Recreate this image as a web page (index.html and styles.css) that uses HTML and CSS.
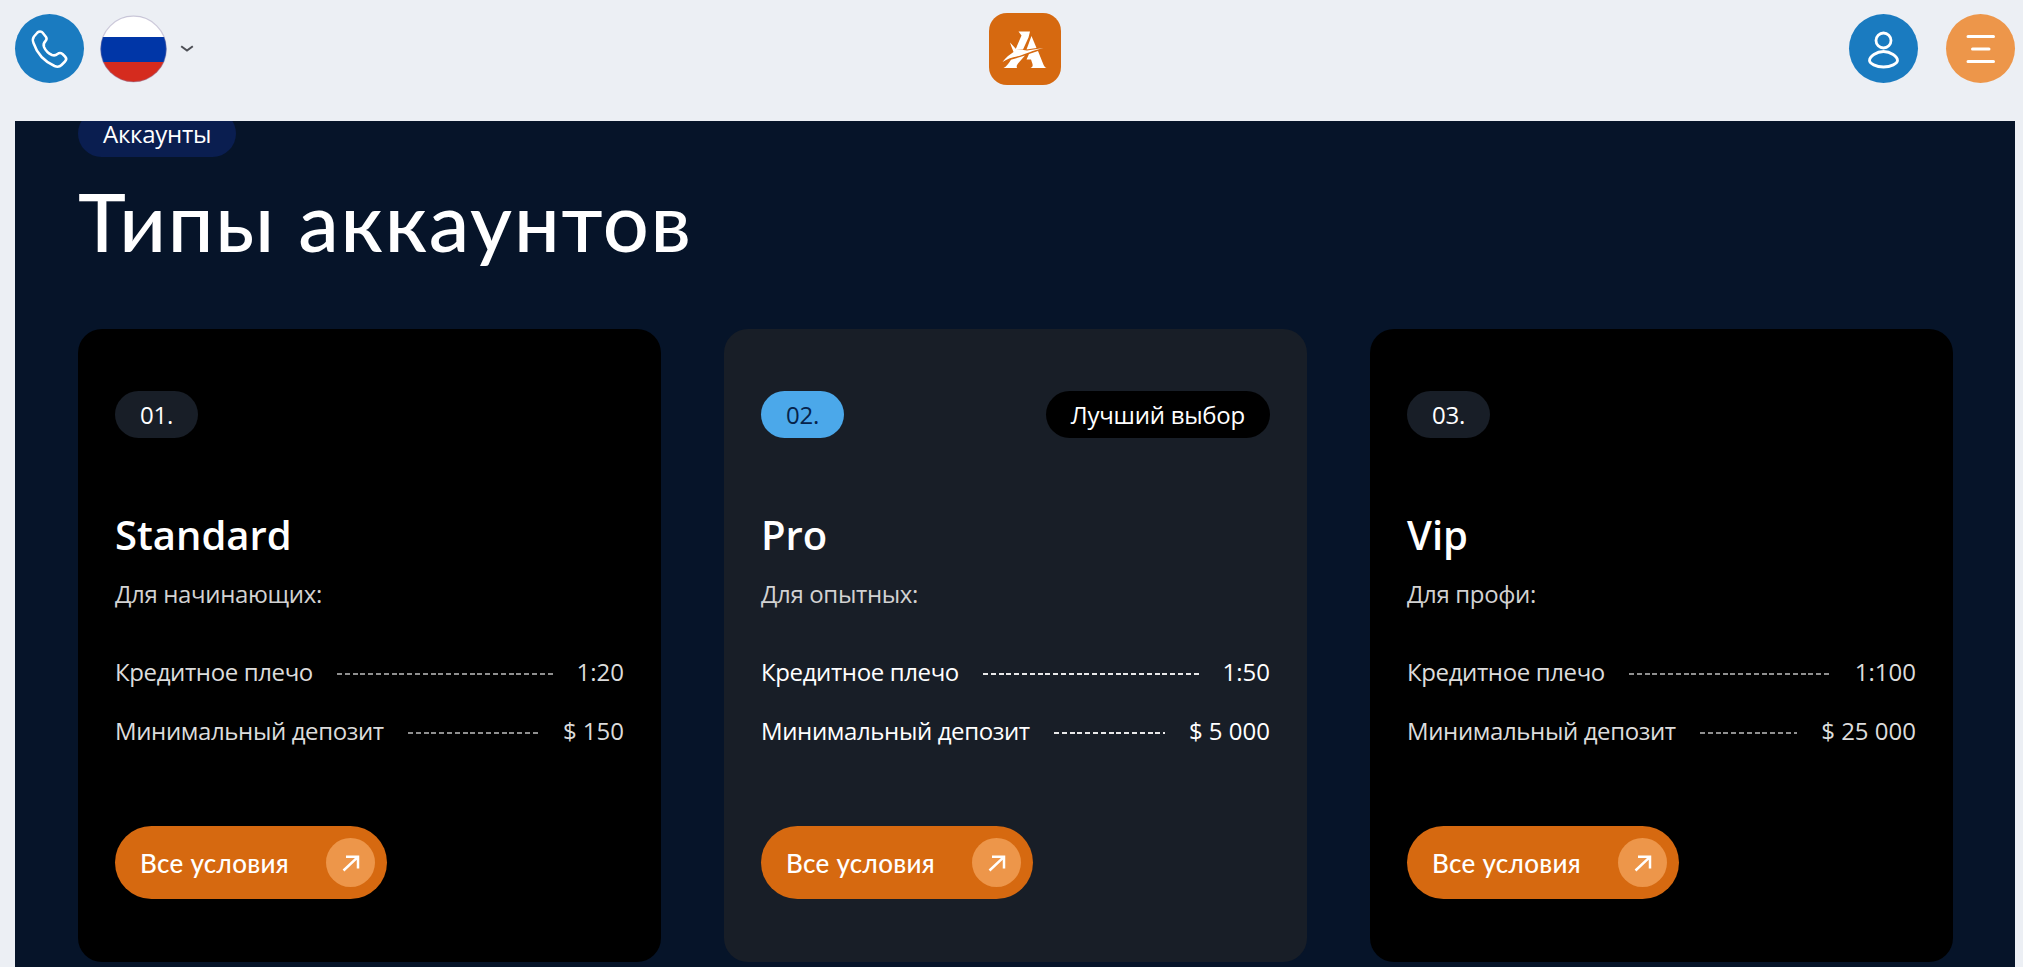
FILE: index.html
```html
<!DOCTYPE html>
<html lang="ru">
<head>
  <meta charset="UTF-8">
  <meta name="viewport" content="width=device-width, initial-scale=1.0">
  <title>Типы аккаунтов</title>

  <link rel="stylesheet" href="styles.css">
</head>
<body>

  <header class="header">
    <div class="header-group">
      <a class="round-btn" href="#" aria-label="Телефон">
        <svg width="69" height="69" viewBox="0 0 69 69" fill="none" stroke="#fff" stroke-width="2.5" stroke-linejoin="round">
          <path d="M22.5 18.5 C24 17 26.500 17 27.500 18.500 L31 23 C32 24.500 31.500 26 30.500 27 C28.500 29 28 30.500 29 33 C30.500 36.500 33.500 39.500 37 41 C39 41.700 41 41.300 42.500 40 C44 38.800 46 38.800 47.500 40 L50 42.500 C51.500 44 51.500 46 50 47.500 L46.500 51 C44.500 53 42 53 39.500 52 C29.500 47.500 22 39.500 18.500 29 C17.500 26.500 17.500 24.500 19 22.500 Z"/>
        </svg>
      </a>
      <button class="lang">
        <svg class="flag" width="67" height="68" viewBox="0 0 67 68">
          <clipPath id="flag-clip"><circle cx="33.500" cy="34" r="33"/></clipPath>
          <g clip-path="url(#flag-clip)">
            <rect width="67" height="68" fill="#fff"/>
            <rect y="22" width="67" height="25" fill="#0036a7"/>
            <rect y="47" width="67" height="21" fill="#d52b1e"/>
          </g>
          <circle cx="33.500" cy="34" r="32.800" fill="none" stroke="#8a7fa8" stroke-opacity=".4" stroke-width="1.200"/>
        </svg>
        <svg width="14" height="8" viewBox="0 0 14 8" fill="none" stroke="#4d4f55" stroke-width="2">
          <path d="M1.200 1.200 L7 5.600 L12.800 1.200"/>
        </svg>
      </button>
    </div>

    <a class="logo" href="#" aria-label="Главная">
      <svg width="72" height="72" viewBox="0 0 72 72" fill="#fff">
        <path d="M29.500 18.500 H41 L39.500 24.500 L34 36.500 L26.500 36.500 L32.500 22.500 Z"/>
        <path d="M42.500 23 L47.500 35 L37.500 36.500 Z"/>
        <path d="M21 29.500 L27 36 L38 37.500 L54.500 35 C44 37.500 36 41 30 43 C23 44.500 17.500 46 13.500 49 C17 44 21 41.500 24.500 39 C23.500 36 22 33 21 29.500 Z"/>
        <path d="M22 46.800 L36 42.500 L29 50.500 C27.500 52.500 27.500 53.500 28 55 H14.500 C17.500 53.500 19.500 51 22 46.800 Z"/>
        <path d="M40 41 L49 38 L54 50.500 C55 53 56 54.500 57.500 55 H41.500 C43.500 54 44 53 43.500 51 L42 46.500 L37.500 46.500 Z"/>
      </svg>
    </a>

    <div class="header-group header-group-right">
      <a class="round-btn" href="#" aria-label="Личный кабинет">
        <svg width="69" height="69" viewBox="0 0 69 69" fill="none" stroke="#fff" stroke-width="2.800">
          <circle cx="34.500" cy="26.500" r="7.500"/>
          <path d="M34.500 37.500 C41.500 37.500 48.500 42.500 48.500 46.500 C48.500 49.500 42 53 34.500 53 C27 53 20.500 49.500 20.500 46.500 C20.500 42.500 27.500 37.500 34.500 37.500 Z"/>
        </svg>
      </a>
      <button class="round-btn round-btn-menu" aria-label="Меню">
        <svg width="69" height="69" viewBox="0 0 69 69" stroke="#fff" stroke-width="3" stroke-linecap="round">
          <path d="M22 22.500 H47.500 M26.500 35 H43 M22 47.500 H47.500"/>
        </svg>
      </button>
    </div>
  </header>

  <main class="accounts">
    <span class="pill pill-section">Аккаунты</span>
    <h1 class="title">Типы аккаунтов</h1>

    <div class="cards">
      <section class="card">
        <div class="card-top">
          <span class="pill">01.</span>
        </div>
        <h2 class="card-title">Standard</h2>
        <p class="card-text">Для начинающих:</p>
        <ul class="card-list">
          <li><span class="label">Кредитное плечо</span><i class="dashes"></i><span>1:20</span></li>
          <li><span class="label">Минимальный депозит</span><i class="dashes"></i><span>$ 150</span></li>
        </ul>
        <a class="card-btn" href="#">
          <span>Все условия</span>
          <svg width="49" height="49" viewBox="0 0 49 49" fill="none" stroke="#fff" stroke-width="2.500">
            <path d="M17.500 32.500 L32 18.800 M20 18.800 H32 V30.500"/>
          </svg>
        </a>
      </section>

      <section class="card card-best">
        <div class="card-top">
          <span class="pill">02.</span>
          <span class="pill pill-best">Лучший выбор</span>
        </div>
        <h2 class="card-title">Pro</h2>
        <p class="card-text">Для опытных:</p>
        <ul class="card-list">
          <li><span class="label">Кредитное плечо</span><i class="dashes"></i><span>1:50</span></li>
          <li><span class="label">Минимальный депозит</span><i class="dashes"></i><span>$ 5 000</span></li>
        </ul>
        <a class="card-btn" href="#">
          <span>Все условия</span>
          <svg width="49" height="49" viewBox="0 0 49 49" fill="none" stroke="#fff" stroke-width="2.500">
            <path d="M17.500 32.500 L32 18.800 M20 18.800 H32 V30.500"/>
          </svg>
        </a>
      </section>

      <section class="card">
        <div class="card-top">
          <span class="pill">03.</span>
        </div>
        <h2 class="card-title">Vip</h2>
        <p class="card-text">Для профи:</p>
        <ul class="card-list">
          <li><span class="label">Кредитное плечо</span><i class="dashes"></i><span>1:100</span></li>
          <li><span class="label">Минимальный депозит</span><i class="dashes"></i><span>$ 25 000</span></li>
        </ul>
        <a class="card-btn" href="#">
          <span>Все условия</span>
          <svg width="49" height="49" viewBox="0 0 49 49" fill="none" stroke="#fff" stroke-width="2.500">
            <path d="M17.500 32.500 L32 18.800 M20 18.800 H32 V30.500"/>
          </svg>
        </a>
      </section>
    </div>
  </main>

</body>
</html>
```
FILE: styles.css
```css
* {
  margin: 0;
  padding: 0;

  box-sizing: border-box;
}

body {
  display: flex;
  flex-direction: column;
  height: 100vh;
  padding: 0 8px 0 15px;

  background: #eceff4;
  color: #fff;
  overflow: hidden;

  font-family: 'Open Sans', sans-serif;
  font-size: 24px;
}

a {
  color: inherit;
  text-decoration: none;
}

button {
  border: none;
  background: none;
}

ul {
  list-style: none;
}

svg {
  display: block;
}

/* Header */
.header {
  display: grid;
  grid-template-columns: 974px 72px 1fr;
  flex: none;

  height: 121px;
  padding-top: 13px;
}

.header-group {
  display: flex;
  gap: 16px;
  padding-top: 1px;
}

.header-group-right {
  justify-content: flex-end;
  gap: 28px;
}

.round-btn {
  width: 69px;
  height: 69px;

  border-radius: 50%;
  background: #1a7bc0;
}

.round-btn-menu {
  background: #ed964a;
}

.lang {
  display: flex;
  align-items: center;
  gap: 13px;

  height: 69px;
}

.logo {
  height: 72px;

  border-radius: 18px;
  background: #d66910;
}

/* Accounts */
.accounts {
  flex: 1;
  min-height: 0;
  padding: 0 62px 0 63px;

  background: #061429;
  overflow: hidden;
}

.pill {
  display: inline-flex;
  align-items: center;

  height: 47px;
  padding: 0 25px;

  border-radius: 24px;
  background: #181e27;

  letter-spacing: -0.25px;
  white-space: nowrap;
}

.pill-section {
  display: flex;
  width: fit-content;
  margin-top: -11px;

  background: #0a1e50;
}

.title {
  margin-top: 14px;

  line-height: 100px;
  font-family: Lato, sans-serif;
  font-size: 81px;
  font-weight: 500;
  letter-spacing: 1.8px;
}

.cards {
  display: grid;
  grid-template-columns: repeat(3, 1fr);
  gap: 63px;

  margin-top: 58px;
}

.card {
  height: 633px;
  padding: 62px 37px 0;

  border-radius: 24px;
  background: #000;
}

.card-best {
  background: #181e27;
}

.card-best .pill {
  background: #4ba8ea;
  color: #06234a;
}

.card-best .pill-best {
  background: #000;
  color: #fff;
}

.card-top {
  display: flex;
  justify-content: space-between;
}

.card-title {
  margin-top: 70px;

  line-height: 54px;
  font-size: 40px;
  font-weight: 600;
}

.card-text {
  margin-top: 14px;

  color: #d2d2d2;
  line-height: 36px;
  letter-spacing: -0.35px;
}

.card-list {
  margin-top: 42px;

  color: #dcdcdc;
}

.card-best .card-list {
  color: #fff;
}

.card-list li {
  display: flex;
  align-items: center;
  gap: 24px;

  line-height: 35px;
}

.card-list li + li {
  margin-top: 24px;
}

.label {
  letter-spacing: -0.38px;
}

.dashes {
  flex: 1;
  height: 2px;
  margin-top: 5px;

  background: repeating-linear-gradient(90deg, currentColor 0 5px, transparent 5px 7.800px);
  opacity: 0.65;
}

.card-best .dashes {
  opacity: 0.9;
}

.card-btn {
  display: flex;
  align-items: center;
  justify-content: space-between;

  width: 272px;
  height: 73px;
  margin-top: 78px;
  padding: 0 12px 0 25px;

  border-radius: 37px;
  background: #d66910;

  font-family: Lato, sans-serif;
  font-size: 26px;
  font-weight: 500;
  letter-spacing: 0.3px;
}

.card-btn svg {
  border-radius: 50%;
  background: #ed964a;
}
```
